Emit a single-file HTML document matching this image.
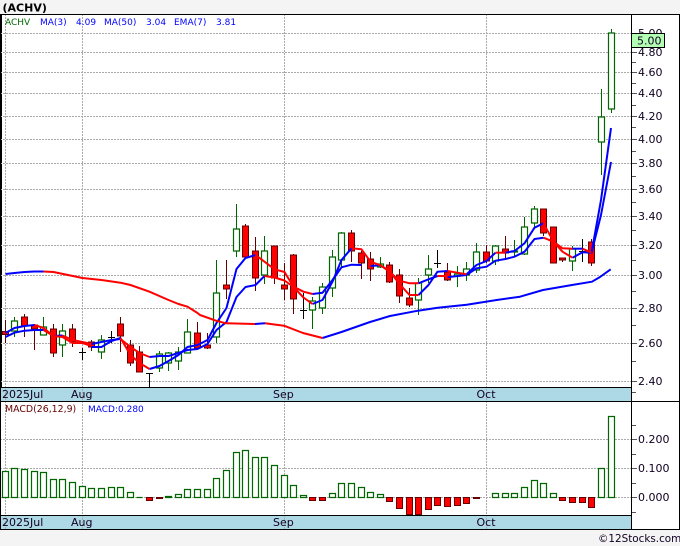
<!DOCTYPE html>
<html><head><meta charset="utf-8"><style>
html,body{margin:0;padding:0;background:#f4f4f4;width:680px;height:546px;overflow:hidden}
svg{display:block;font-family:"DejaVu Sans",sans-serif}
text{font-size:11px;fill:#102}
.l{font-size:9px}
</style></head><body>
<svg width="680" height="546" viewBox="0 0 680 546">
<rect x="0" y="0" width="680" height="546" fill="#f4f4f4"/>
<rect x="1" y="14" width="678" height="516" fill="#fff"/>
<rect x="1" y="387" width="631" height="14" fill="#add8e6"/>
<rect x="1" y="515" width="631" height="15" fill="#add8e6"/>
<path fill="none" stroke="#aaa" stroke-dasharray="2 1" d="M0 33.5H632M0 52.5H632M0 72.5H632M0 93.5H632M0 116.5H632M0 139.5H632M0 163.5H632M0 189.5H632M0 216.5H632M0 245.5H632M0 275.5H632M0 308.5H632M0 343.5H632M0 381.5H632M0 439.5H632M0 468.5H632M0 497.5H632M5.5 14V530M82.5 14V530M284.5 14V530M486.5 14V530"/>
<path fill="none" stroke="#000" d="M0 14.5H679.5V529.5H0.5V14.5M0 387.5H632M0 401.5H679.5M0 515.5H632M631.5 14V530"/>
<path fill="none" stroke="#000" stroke-width="2" d="M1 15V33M1 34V52M1 53V72M1 73V93M1 94V116M1 117V139M1 140V163M1 164V189M1 190V216M1 217V245M1 246V275M1 276V308M1 309V343M1 344V381M1 382V387"/>
<path fill="none" stroke="#555" d="M632 33.5H637M632 52.5H637M632 72.5H637M632 93.5H637M632 116.5H637M632 139.5H637M632 163.5H637M632 189.5H637M632 216.5H637M632 245.5H637M632 275.5H637M632 308.5H637M632 343.5H637M632 381.5H637M632 62.5H636M632 83.5H636M632 105.5H636M632 127.5H636M632 151.5H636M632 176.5H636M632 202.5H636M632 230.5H636M632 260.5H636M632 291.5H636M632 325.5H636M632 361.5H636M632 392.5H636M632 439.5H637M632 468.5H637M632 497.5H637M632 425.5H636M632 454.5H636M632 483.5H636M632 512.5H636"/>

<path fill="none" stroke="#060" d="M14.5 317V337M43.5 317V335M62.5 324V357M101.5 335V359M159.5 351V372M168.5 352V371M178.5 347V370M187.5 319V353M216.5 260V343M236.5 204V257M264.5 236V284M312.5 297V329M322.5 283V314M332.5 250V297M341.5 232V267M380.5 257V268M418.5 278V315M428.5 255V283M457.5 266V287M466.5 262V281M476.5 243V273M495.5 245V265M514.5 240V256M524.5 217V255M534.5 206V228M572.5 246V271M601.5 89V175M611.5 29V113"/>
<path fill="none" stroke="#600" d="M5.5 320V343M24.5 314V337M34.5 324V350M53.5 324V357M72.5 324V347M91.5 340V351M120.5 317V352M130.5 340V366M139.5 346V372M197.5 322V350M207.5 333V349M226.5 260V299M245.5 224V258M255.5 237V291M274.5 246V284M284.5 263V300M293.5 254V314M351.5 230V262M361.5 251V279M370.5 252V281M389.5 262V283M399.5 269V303M409.5 288V307M447.5 263V281M486.5 245V263M505.5 236V259M543.5 209V236M562.5 258V262M591.5 239V266"/>
<path fill="none" stroke="#000" d="M82.5 348V360M79 352.5H86M111.5 331V343M108 337.5H115M149.5 373V387M146 373.5H153M303.5 293V319M300 310.5H307M437.5 250V268M434 263.5H441M582.5 239V262M579 251.5H586"/>
<path fill="#fff" stroke="#060" stroke-width="1.2" d="M11.5 321h6v10h-6zM40.5 327h6v8h-6zM59.5 331h6v14h-6zM98.5 340h6v12h-6zM156.5 354h6v14h-6zM165.5 353h6v10h-6zM175.5 352h6v9h-6zM184.5 332h6v21h-6zM213.5 293h6v44h-6zM233.5 229h6v22h-6zM261.5 251h6v24h-6zM309.5 301h6v9h-6zM319.5 287h6v21h-6zM329.5 257h6v31h-6zM338.5 233h6v27h-6zM377.5 264h6v3h-6zM415.5 283h6v17h-6zM425.5 269h6v6h-6zM454.5 274h6v2h-6zM463.5 269h6v6h-6zM473.5 252h6v18h-6zM492.5 246h6v15h-6zM511.5 251h6v1h-6zM521.5 227h6v27h-6zM531.5 209h6v14h-6zM569.5 249h6v12h-6zM598.5 117h6v25h-6zM608.5 33h6v76h-6z"/>
<path fill="#f00" stroke="#600" d="M2.5 331.5h6v3h-6zM21.5 317h6v9h-6zM31.5 325h6v4h-6zM50.5 329h6v24h-6zM69.5 329h6v13h-6zM88.5 342h6v5h-6zM117.5 324h6v12h-6zM127.5 345h6v18h-6zM136.5 352h6v20h-6zM194.5 333h6v15h-6zM204.5 345h6v3h-6zM223.5 285h6v4h-6zM242.5 226h6v31h-6zM252.5 251h6v27h-6zM271.5 246h6v32h-6zM281.5 285h6v4h-6zM290.5 255h6v44h-6zM348.5 233h6v18h-6zM358.5 253h6v10h-6zM367.5 259h6v10h-6zM386.5 265h6v17h-6zM396.5 275h6v21h-6zM406.5 298h6v7h-6zM444.5 272h6v8h-6zM483.5 252h6v9h-6zM502.5 249h6v4h-6zM540.5 209h6v24h-6zM550.5 227h6v36h-6zM559.5 258h6v2h-6zM588.5 242h6v21h-6z"/>

<g fill="none" stroke-width="2" stroke-linejoin="round">
<g stroke="#00f">
<path d="M5.5 274L14.5 273L24.5 272L34.5 271.5L43.5 271.5"/>
<path d="M265 323.3L255 324M322.5 338L341.5 332L370 322L390 316L418 310.7L437.7 307.7L466.7 304.7L496.7 300L520 296.7L543 290L572 285L592 281.7L600 277L610.7 269.3"/>
<path d="M5.5 333L14.5 328L24.5 326L34.5 325"/>
<path d="M5.5 337L14.5 332.7L24.5 330.7L34.5 330L43.5 330"/>
<path d="M53.5 336L62.5 335.5"/>
<path d="M91.5 347L101.5 347L111.5 341L120.5 338"/>
<path d="M91.5 344L101.5 342L111.5 340L120.5 339"/>
<path d="M149.5 369L159.5 366L168.5 361L178.5 355L187.5 347L197.5 345L207.5 340L216.5 323L226.5 308L236.5 269L245.5 258L255.5 255"/>
<path d="M149.5 357L159.5 356L168.5 356L178.5 353L187.5 350L197.5 349L207.5 344L216.5 330L226.5 322L236.5 297L245.5 287L255.5 285L264.5 276"/>
<path d="M312.5 304L322.5 300L332.5 281.7L341.5 260L351.5 248.3"/>
<path d="M312.5 294L322.5 292.7L332.5 280L341.5 267.3L351.5 264.7L361.5 265"/>
<path d="M370.5 266L380.5 265.3"/>
<path d="M418.5 295L428.5 285L437.5 271.7L447.5 271"/>
<path d="M418.5 283.3L428.5 279.3L437.5 276"/>
<path d="M447.5 277.3L457.5 276L466.5 275L476.5 268.3L486.5 266.7L495.5 260.7L505.5 259L514.5 256.7L524.5 251.7L534.5 239L543.5 237.7"/>
<path d="M466.5 274.3L476.5 265L486.5 261L495.5 252.7"/>
<path d="M505.5 252.7L514.5 251L524.5 243.3L534.5 227.7L543.5 223.3"/>
<path d="M572.5 257.7L582.5 252.3L591.5 252.7L601 215L611 162"/>
<path d="M572.5 248.7L582.5 248.7"/>
<path d="M591.5 252.7L601 200L611 128"/>
</g>
<g stroke="#f00">
<path d="M43.5 271.5L53.5 272L82.5 278L101.5 280L120.5 282.7L130.5 285L149.5 291.7L168.5 300L178.5 304L187.5 306.7L197.5 313L200 315L216 320.7L226 323.3L255 324"/>
<path d="M265 323.3L284 325.7L303 333L322.5 338"/>
<path d="M34.5 325L43.5 328L53.5 336L62.5 337L72.5 343L82.5 343L91.5 346"/>
<path d="M43.5 330L53.5 336"/>
<path d="M62.5 335.5L72.5 340L82.5 342L91.5 344"/>
<path d="M120.5 338L130.5 355L139.5 363L149.5 369"/>
<path d="M120.5 339L130.5 347L139.5 353L149.5 357"/>
<path d="M255.5 255L264.5 261.7L274.5 269.3L284.5 272L293.5 286.7L303.5 291.7L312.5 294"/>
<path d="M264.5 276L274.5 277.5L284.5 280.5L293.5 287L303.5 297.5L312.5 304"/>
<path d="M351.5 248.3L361.5 249.3L370.5 261.7L380.5 265.3L389.5 271L399.5 284L409.5 295L418.5 295"/>
<path d="M380.5 265.3L389.5 271.7L399.5 280.7L409.5 283.3L418.5 283.3"/>
<path d="M437.5 276L447.5 276"/>
<path d="M447.5 271L457.5 272.7L466.5 274.3"/>
<path d="M495.5 252.7L505.5 252.7"/>
<path d="M543.5 223.3L553.5 241.7L562.5 248.3L572.5 248.7"/>
<path d="M543.5 237.7L553.5 241.7L562.5 251.7L572.5 257.7"/>
<path d="M582.5 248.7L591.5 252.7"/>
</g>
</g>

<path fill="#fff" stroke="#060" stroke-width="1.2" d="M2.5 471.5h6v26h-6zM11.5 468.5h6v29h-6zM21.5 469.5h6v28h-6zM31.5 471.5h6v26h-6zM40.5 472.5h6v25h-6zM50.5 479.5h6v18h-6zM59.5 479.5h6v18h-6zM69.5 482.5h6v15h-6zM79.5 486.5h6v11h-6zM88.5 488.5h6v9h-6zM98.5 488.5h6v9h-6zM108.5 487.5h6v10h-6zM117.5 487.5h6v10h-6zM127.5 492.5h6v5h-6zM136.5 497.5h6M165.5 496.5h6v1h-6zM175.5 494.5h6v3h-6zM184.5 489.5h6v8h-6zM194.5 489.5h6v8h-6zM204.5 489.5h6v8h-6zM213.5 478.5h6v19h-6zM223.5 470.5h6v27h-6zM233.5 452.5h6v45h-6zM242.5 450.5h6v47h-6zM252.5 457.5h6v40h-6zM261.5 457.5h6v40h-6zM271.5 465.5h6v32h-6zM281.5 475.5h6v22h-6zM290.5 485.5h6v12h-6zM300.5 495.5h6v2h-6zM329.5 493.5h6v4h-6zM338.5 483.5h6v14h-6zM348.5 483.5h6v14h-6zM358.5 487.5h6v10h-6zM367.5 492.5h6v5h-6zM377.5 494.5h6v3h-6zM492.5 493.5h6v4h-6zM502.5 493.5h6v4h-6zM511.5 493.5h6v4h-6zM521.5 487.5h6v10h-6zM531.5 480.5h6v17h-6zM540.5 483.5h6v14h-6zM550.5 493.5h6v4h-6zM598.5 468.5h6v29h-6zM608.5 416.5h6v81h-6z"/>
<path fill="#f00" stroke="#600" d="M146.5 497.5h6v3h-6zM156.5 497.5h6v1h-6zM309.5 497.5h6v3h-6zM319.5 497.5h6v3h-6zM386.5 497.5h6v4h-6zM396.5 497.5h6v11h-6zM406.5 497.5h6v17h-6zM415.5 497.5h6v17h-6zM425.5 497.5h6v12h-6zM434.5 497.5h6v8h-6zM444.5 497.5h6v9h-6zM454.5 497.5h6v8h-6zM463.5 497.5h6v6h-6zM473.5 497.5h6v1h-6zM559.5 497.5h6v3h-6zM569.5 497.5h6v5h-6zM579.5 497.5h6v5h-6zM588.5 497.5h6v10h-6z"/>

<text x="2.5" y="11.5" style="font-weight:bold;fill:#000">(ACHV)</text>
<text class="l" x="5" y="25" style="fill:#060">ACHV</text>
<text class="l" x="40" y="25" style="fill:#00f">MA(3)</text>
<text class="l" x="76" y="25" style="fill:#00f">4.09</text>
<text class="l" x="104" y="25" style="fill:#00f">MA(50)</text>
<text class="l" x="146" y="25" style="fill:#00f">3.04</text>
<text class="l" x="174" y="25" style="fill:#00f">EMA(7)</text>
<text class="l" x="216" y="25" style="fill:#00f">3.81</text>
<text class="l" x="5" y="412" style="fill:#600;font-size:9.4px">MACD(26,12,9)</text>
<text class="l" x="88" y="412" style="fill:#00f">MACD:0.280</text>

<text x="638" y="37">5.00</text>
<text x="638" y="56">4.80</text>
<text x="638" y="76">4.60</text>
<text x="638" y="97">4.40</text>
<text x="638" y="120">4.20</text>
<text x="638" y="143">4.00</text>
<text x="638" y="167">3.80</text>
<text x="638" y="193">3.60</text>
<text x="638" y="220">3.40</text>
<text x="638" y="249">3.20</text>
<text x="638" y="279">3.00</text>
<text x="638" y="312">2.80</text>
<text x="638" y="347">2.60</text>
<text x="638" y="385">2.40</text>
<rect x="631.5" y="33.5" width="33" height="14" fill="#b3ffb3" stroke="#000"/>
<text x="637" y="44.5">5.00</text>
<text x="638" y="443">0.200</text>
<text x="638" y="472">0.100</text>
<text x="638" y="501">0.000</text>

<text x="2" y="398">2025Jul</text>
<text x="71" y="398">Aug</text>
<text x="273" y="398">Sep</text>
<text x="476.5" y="398">Oct</text>
<text x="2" y="526">2025Jul</text>
<text x="71" y="526">Aug</text>
<text x="273" y="526">Sep</text>
<text x="476.5" y="526">Oct</text>
<text x="598" y="542" style="font-size:10.4px">©12Stocks.com</text>
</svg>
</body></html>
